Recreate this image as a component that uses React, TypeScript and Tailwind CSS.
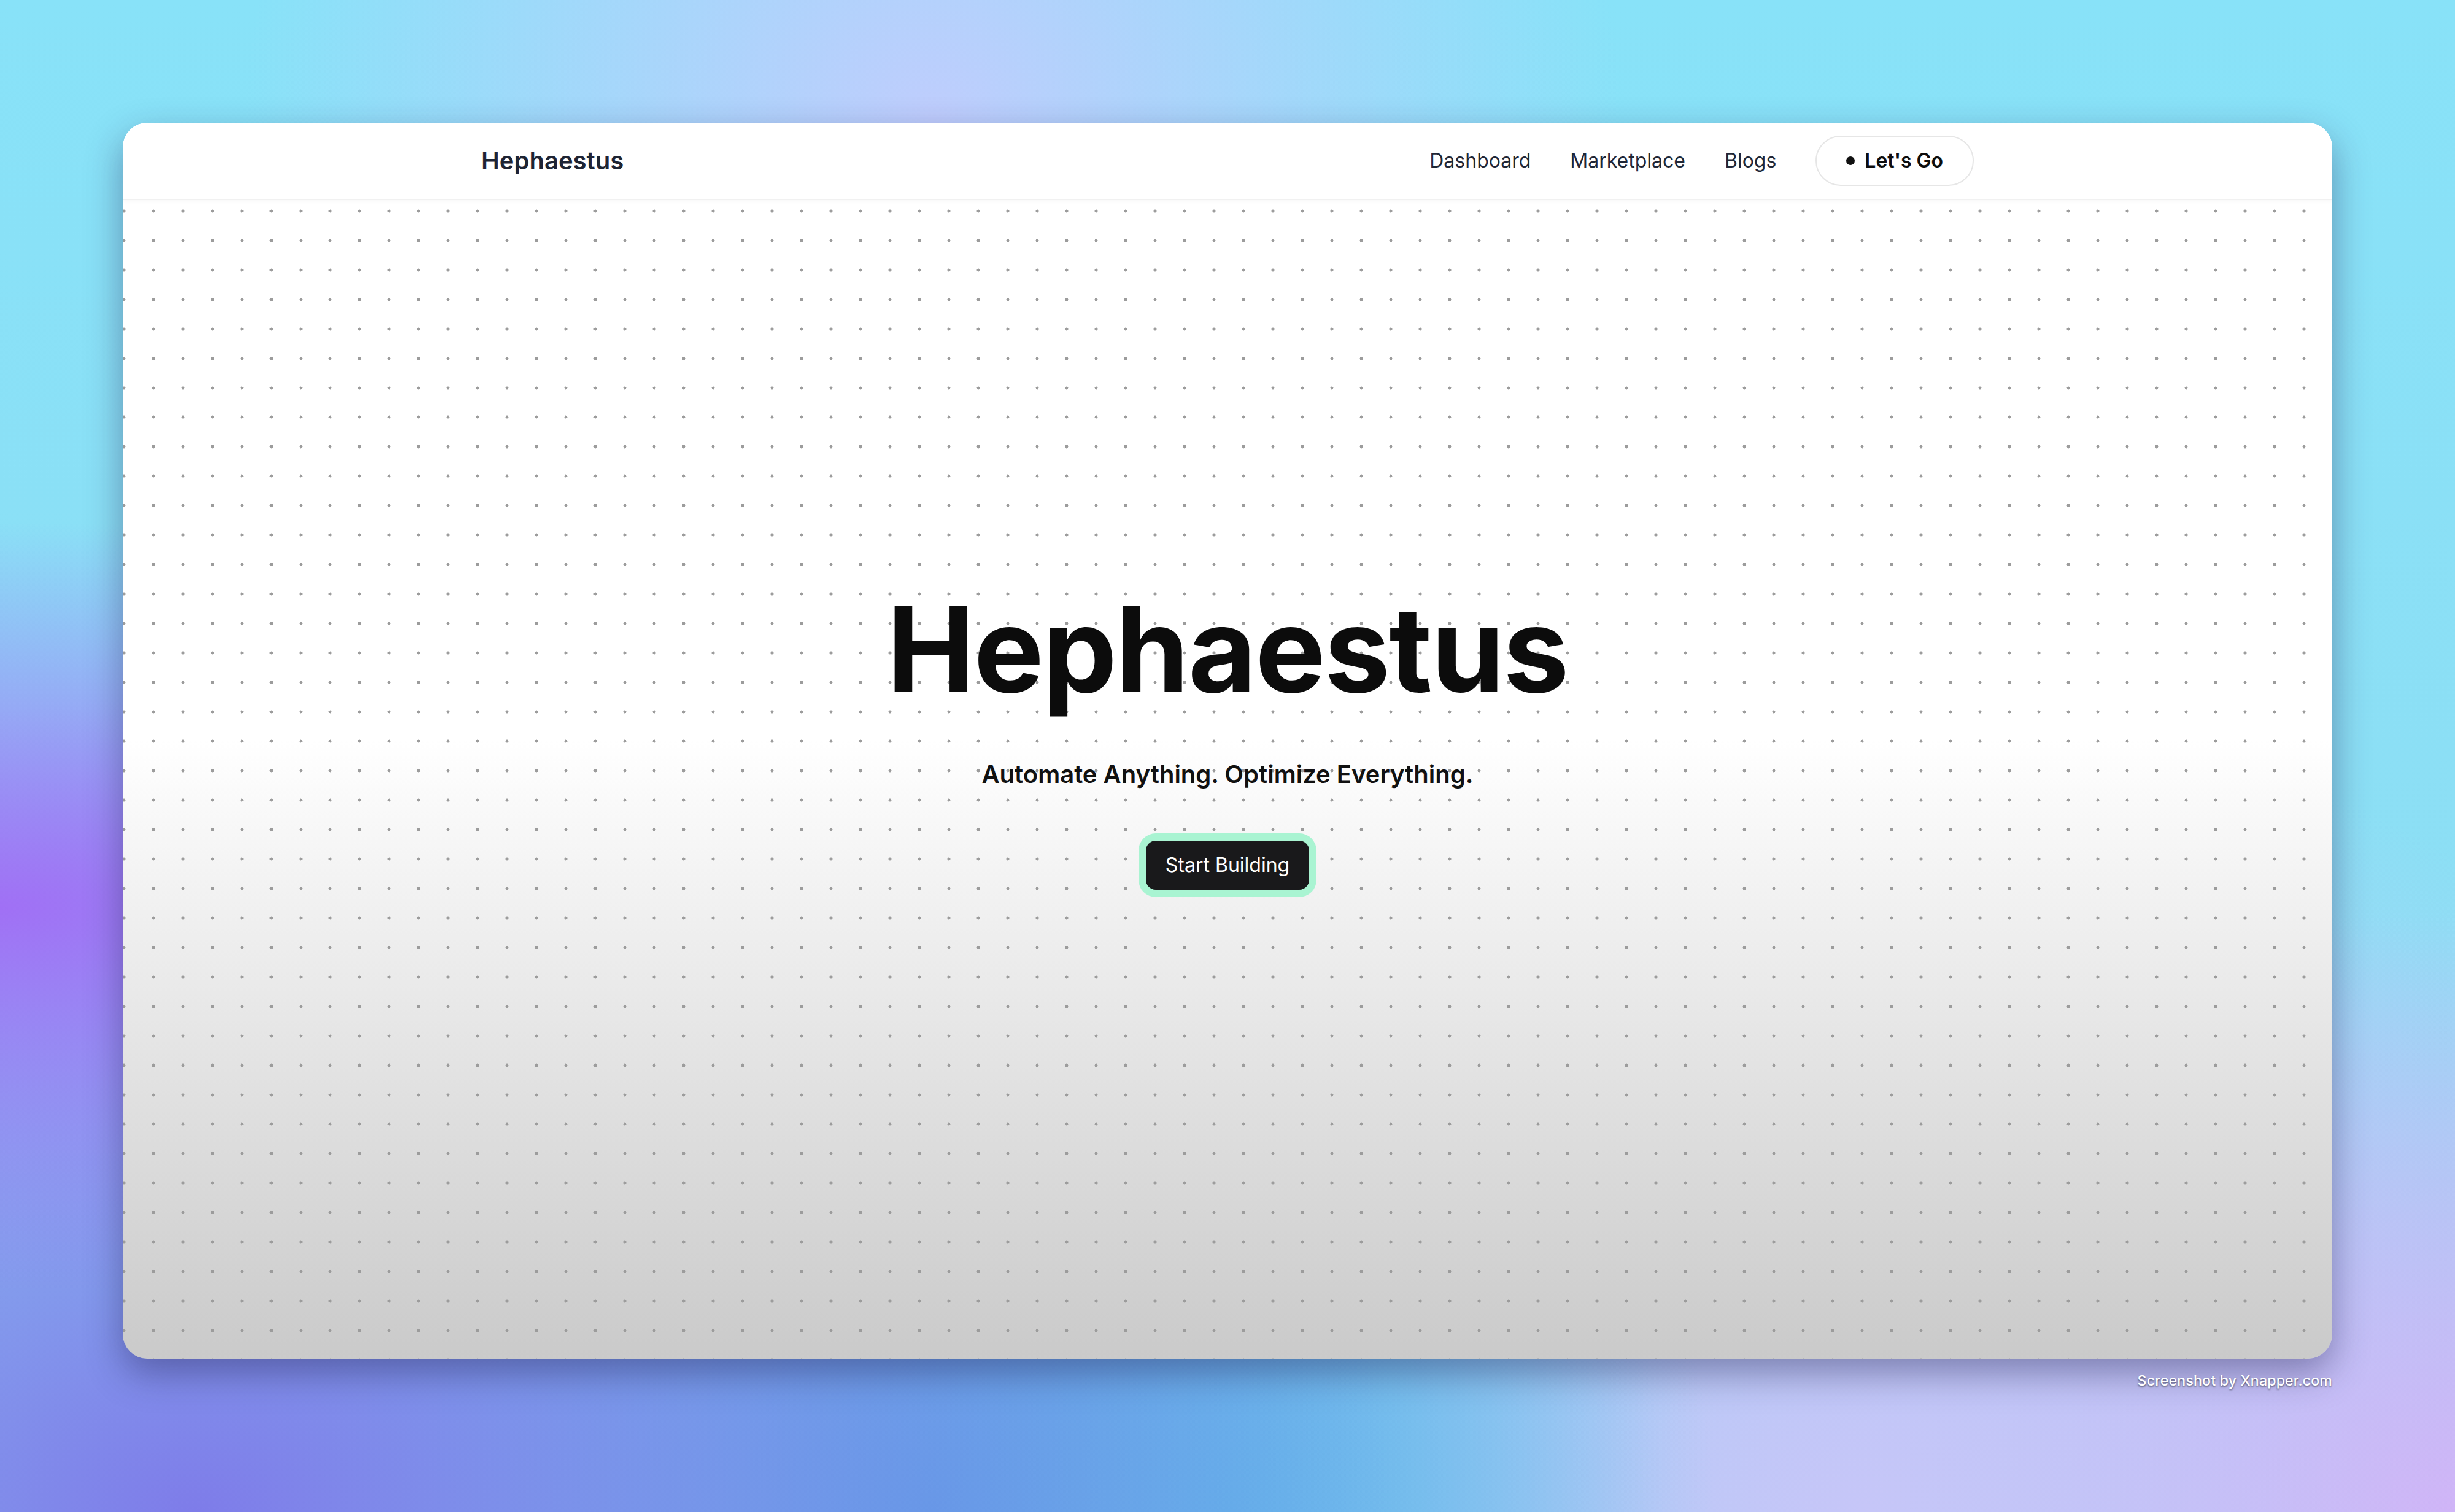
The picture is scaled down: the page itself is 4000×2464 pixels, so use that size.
import React from "react";

const NAV_LINKS = ["Dashboard", "Marketplace", "Blogs"];

function Header() {
  return (
    <header className="h-[126px] shrink-0 bg-white border-b-2 border-[#f1f1f1] shadow-[0_2px_6px_rgba(0,0,0,0.03)]">
      <div className="max-w-[2560px] h-full mx-auto px-[64px] flex items-center justify-between">
        <span className="text-[40px] leading-[48px] font-semibold text-[#1e2433]">Hephaestus</span>
        <nav className="flex items-center gap-[64px]">
          {NAV_LINKS.map((l) => (
            <a key={l} className="text-[32px] leading-[44px] text-[#1f2737]">
              {l}
            </a>
          ))}
          <button className="h-[82px] px-[48px] rounded-full border-2 border-[#e6e6e6] bg-white flex items-center gap-[16px]">
            <span className="w-[14px] h-[14px] rounded-full bg-[#111111]" />
            <span className="text-[32px] leading-[44px] font-semibold text-[#0d0d0d]">Let's Go</span>
          </button>
        </nav>
      </div>
    </header>
  );
}

function Hero() {
  return (
    <main className="flex-1 flex flex-col items-center pt-[636px] bg-[image:radial-gradient(circle,#9c9c9c_2.2px,transparent_2.8px)] bg-[size:48px_48px] bg-[position:-22px_-6px]">
      <h1 className="text-[192px] leading-none font-bold tracking-[-0.01em] text-[#0c0c0c]">Hephaestus</h1>
      <p className="mt-[80px] text-[40px] leading-[56px] font-semibold text-[#111111]">
        Automate Anything. Optimize Everything.
      </p>
      <button className="mt-[80px] h-[80px] px-[32px] rounded-[16px] bg-[#19191b] text-white text-[32px] leading-[48px] shadow-[0_0_0_12px_#a9f4d2]">
        Start Building
      </button>
    </main>
  );
}

export default function App() {
  return (
    <div className="w-[4000px] h-[2464px] pt-[200px] px-[200px] font-['Inter','Noto_Sans',sans-serif] bg-[image:radial-gradient(ellipse_at_38%_8%,#bfcdfd_0%,transparent_32%),radial-gradient(ellipse_at_0%_60%,#a070f5_0%,transparent_30%),radial-gradient(ellipse_at_8%_100%,#7e7ce9_0%,transparent_38%),radial-gradient(ellipse_at_38%_100%,#5aa9e6_0%,transparent_34%),radial-gradient(ellipse_at_50%_100%,#6cc2ee_0%,transparent_28%),radial-gradient(ellipse_at_76%_100%,#c6c6f8_0%,transparent_38%),radial-gradient(ellipse_at_100%_100%,#d7a8f6_0%,transparent_28%),linear-gradient(to_bottom,#88e2f8,#8fdcf2)]">
      <div className="h-[2014px] rounded-[40px] overflow-hidden flex flex-col bg-linear-to-b from-white via-white via-50% to-[#cacaca] shadow-[0_24px_60px_rgba(30,30,80,0.42)]">
        <Header />
        <Hero />
      </div>
      <div className="flex justify-end mt-[21px]">
        <span className="text-[23px] leading-[30px] font-medium tracking-[0.01em] text-white [text-shadow:0_2px_3px_rgba(0,0,0,0.55)]">
          Screenshot by Xnapper.com
        </span>
      </div>
    </div>
  );
}
